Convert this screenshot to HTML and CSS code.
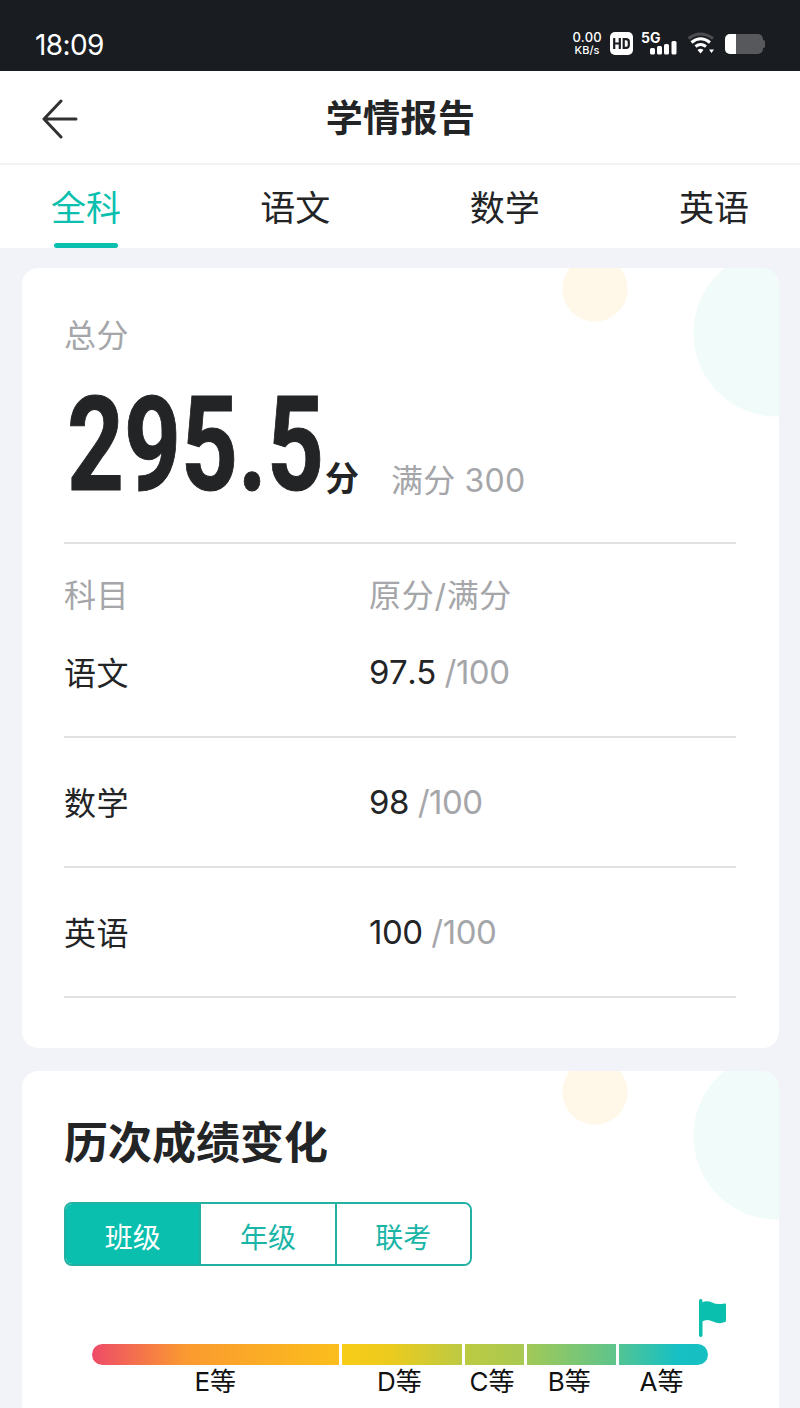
FILE: index.html
```html
<!DOCTYPE html>
<html lang="zh-CN">

<head>
    <meta charset="UTF-8">
    <meta name="viewport" content="width=device-width, initial-scale=1.0">
    <title>学情报告</title>
    <link rel="stylesheet" href="styles.css">
</head>

<body>
    <div class="status">
        <span class="time">18:09</span>
        <div class="status-icons">
            <div class="speed"><span>0.00</span><span>KB/s</span></div>
            <svg class="hd" width="23" height="23" viewBox="0 0 23 23">
                <rect width="23" height="23" rx="5" fill="#fff"/>
                <path d="M4.200 6v11M9.800 6v11M4.200 11.500H9.800M13.700 7.100H16c2 0 2.800 1 2.800 2.600v3.600c0 1.600-.8 2.600-2.800 2.600h-2.300z" fill="none" stroke="#191c21" stroke-width="2.200"/>
            </svg>
            <div class="signal">
                <span>5G</span>
                <svg width="27" height="14" viewBox="0 0 27 14" fill="#fff">
                    <rect x="0" y="7" width="5" height="6.500" rx="1.500"/>
                    <rect x="7" y="5" width="5" height="8.500" rx="1.500"/>
                    <rect x="14" y="3" width="5" height="10.500" rx="1.500"/>
                    <rect x="21.500" y="0" width="5" height="13.500" rx="1.500"/>
                </svg>
            </div>
            <svg class="wifi" width="28" height="23" viewBox="0 0 28 23" fill="none" stroke-width="3">
                <path d="M1.500 6.500Q13.500-2.500 26 6.500" stroke="#4b4d51"/>
                <path d="M4.500 10.500Q13.500 3 23 10.500M8.500 14.500Q13.500 10.500 19 14.500" stroke="#fff"/>
                <path d="M10.500 18q3-2.500 6 0l-3 3.500zM22 17.500h5l-2.500 3.500z" fill="#fff"/>
            </svg>
            <svg class="battery" width="40" height="20" viewBox="0 0 40 20">
                <rect width="38" height="20" rx="5" fill="#57585b"/>
                <rect x="37" y="6" width="3" height="8" rx="1.500" fill="#57585b"/>
                <path d="M5 0h6v20H5a5 5 0 0 1-5-5V5a5 5 0 0 1 5-5z" fill="#fff"/>
            </svg>
        </div>
    </div>

    <header class="header">
        <svg class="back" width="38" height="40" viewBox="0 0 38 40" fill="none" stroke="#303133" stroke-width="3" stroke-linecap="round" stroke-linejoin="round">
            <path d="M20 2L3 20l17 18M3 20h32"/>
        </svg>
        <h1>学情报告</h1>
    </header>

    <nav class="tabs">
        <a class="tab active">全科</a>
        <a class="tab">语文</a>
        <a class="tab">数学</a>
        <a class="tab">英语</a>
    </nav>

    <main>
        <section class="card total">
            <p class="label">总分</p>
            <div class="score">
                <div class="number"><span>295.5</span></div>
                <span class="unit">分</span>
                <span class="full">满分 300</span>
            </div>
            <div class="row head"><span>科目</span><span>原分/满分</span></div>
            <div class="row"><span>语文</span><span>97.5 <i>/100</i></span></div>
            <div class="row"><span>数学</span><span>98 <i>/100</i></span></div>
            <div class="row"><span>英语</span><span>100 <i>/100</i></span></div>
        </section>

        <section class="card history">
            <h2>历次成绩变化</h2>
            <div class="switch">
                <button class="on">班级</button>
                <button>年级</button>
                <button>联考</button>
            </div>
            <div class="flag">
                <svg width="28" height="38" viewBox="0 0 28 38" fill="#0abfae">
                    <rect x="0" y="0" width="3.500" height="38" rx="1.700"/>
                    <path d="M3 3.500Q8 1 13 3.500T25.500 4.500Q27 4 27 5.500V21.500Q27 22.500 26 23Q20 25.500 14 22.500T3 22.500z"/>
                </svg>
            </div>
            <div class="levels">
                <div class="level e"><b></b><span>E等</span></div>
                <div class="level d"><b></b><span>D等</span></div>
                <div class="level c"><b></b><span>C等</span></div>
                <div class="level b"><b></b><span>B等</span></div>
                <div class="level a"><b></b><span>A等</span></div>
            </div>
        </section>
    </main>
</body>

</html>
```
FILE: styles.css
```css
* {
    box-sizing: border-box;
    margin: 0;
    padding: 0;
}

body {
    height: 1408px;
    overflow: hidden;
    background: #f2f3f8;
    color: #232426;
    font-family: Inter, "Noto Sans CJK SC", sans-serif;
    font-kerning: none;
}

/* status bar */
.status {
    display: flex;
    justify-content: space-between;
    height: 71px;
    padding: 17px 35px 0 35px;
    background: #191c21;
    color: #fff;
}
.time {
    font-size: 28px;
    line-height: 56px;
    letter-spacing: -0.6px;
}
.status-icons {
    display: flex;
    align-items: flex-start;
    padding-top: 15px;
}
.speed {
    display: flex;
    flex-direction: column;
    align-items: center;
    width: 30px;
    margin: -1px 8px 0 0;
    font-size: 13px;
    font-weight: 500;
    line-height: 13px;
}
.speed span + span {
    font-size: 11px;
    line-height: 12px;
}
.signal {
    width: 36px;
    height: 23px;
    margin: 0 10px 0 8px;
}
.signal span {
    display: block;
    font-size: 14px;
    font-weight: 700;
    line-height: 11px;
    height: 9px;
}
.signal svg {
    display: block;
    margin-left: 9px;
}
.battery {
    margin: 2px 0 0 10px;
}

/* title + tabs */
.header {
    display: grid;
    grid-template-columns: 60px 1fr 60px;
    align-items: center;
    height: 94px;
    padding: 3px 40px 0 41px;
    background: #fff;
    border-bottom: 2px solid #f3f3f5;
}
.header h1 {
    font-size: 37px;
    font-weight: 700;
    line-height: 50px;
    letter-spacing: 0.4px;
    text-align: center;
}
.tabs {
    display: flex;
    justify-content: space-between;
    height: 83px;
    padding: 0 51px;
    background: #fff;
}
.tab {
    display: flex;
    flex-direction: column;
    align-items: center;
    font-size: 35px;
    line-height: 86px;
    height: 83px;
}
.active {
    color: #0abfae;
}
.active::after {
    content: "";
    width: 64px;
    height: 6px;
    margin-top: -8px;
    border-radius: 3px;
    background: #0abfae;
}

/* cards */
main {
    padding: 20px 21px 0 22px;
}
.card {
    padding: 0 43px 0 42px;
    border-radius: 16px;
    background:
        radial-gradient(circle at 573px 21px, #fff7e8 32px, transparent 33px),
        radial-gradient(circle at 755px 65px, #f1fbf9 83px, transparent 84px),
        #fff;
}
.total {
    height: 780px;
    padding-top: 44px;
}
.label {
    font-size: 32px;
    line-height: 48px;
    letter-spacing: 0.5px;
    color: #a5a6a9;
}
.score {
    display: flex;
    height: 184px;
    border-bottom: 2px solid #e1e1e3;
    white-space: nowrap;
}
.number {
    width: 261px;
    padding-left: 3px;
    overflow: hidden;
    font-family: Roboto, sans-serif;
    font-size: 132px;
    font-weight: 700;
    line-height: 170px;
}
.number span {
    display: inline-block;
    width: 340px;
    transform: scaleX(0.753);
    transform-origin: 0 0;
    -webkit-text-stroke: 1px #232426;
}
.unit {
    width: 66px;
    font-size: 34px;
    font-weight: 700;
    line-height: 50px;
    margin-top: 94px;
}
.full {
    font-size: 32px;
    line-height: 48px;
    margin-top: 97px;
    letter-spacing: 0.2px;
    color: #a5a6a9;
}
.row {
    display: grid;
    grid-template-columns: 305px 1fr;
    align-items: center;
    height: 130px;
    padding-top: 3px;
    border-bottom: 2px solid #e1e1e3;
    font-size: 32px;
    line-height: 48px;
    letter-spacing: 0.5px;
}
.row span + span {
    margin-top: -3px;
    font-size: 33px;
    letter-spacing: -0.5px;
}
.row i {
    font-style: normal;
    color: #a5a6a9;
}
.head {
    height: 64px;
    padding-top: 36px;
    border: 0;
    line-height: 32px;
    color: #a5a6a9;
}
.row.head span + span {
    margin-top: 0;
    font-size: 32px;
    letter-spacing: 0.7px;
}

.history {
    height: 400px;
    margin-top: 23px;
    padding-top: 41px;
}
.history h2 {
    font-size: 44px;
    font-weight: 700;
    line-height: 62px;
}
.switch {
    display: flex;
    width: 408px;
    height: 64px;
    margin-top: 28px;
    border: 2px solid #22b0a3;
    border-radius: 8px;
    overflow: hidden;
}
.switch button {
    flex: 1;
    border: 0;
    border-left: 2px solid #22b0a3;
    background: #fff;
    color: #19b5a7;
    font-family: inherit;
    font-size: 28px;
    padding-top: 4px;
}
.switch .on {
    border-left: 0;
    background: #0abfae;
    color: #fff;
}
.flag {
    display: flex;
    justify-content: flex-end;
    height: 78px;
    padding: 33px 9px 0 0;
}

/* grade scale */
.levels {
    display: grid;
    grid-template-columns: 246.5px 120px 59px 89.5px 89px;
    gap: 3px;
    margin: 0 29px 0 28px;
    color: #111;
    text-align: center;
}
.level b {
    display: block;
    height: 21px;
}
.level span {
    display: block;
    margin: 0 2px 0 -2px;
    font-size: 26px;
    line-height: 34px;
    white-space: nowrap;
}
.e b {
    border-radius: 11px 0 0 11px;
    background: linear-gradient(90deg, #ee4b68, #fa9a30 38%, #fbbe1c);
}
.level.e span {
    margin: 0;
}
.d b {
    background: linear-gradient(90deg, #f8cc18, #eccb1e 40%, #bdca42);
}
.c b {
    background: linear-gradient(90deg, #bdca42, #a8c952);
}
.b b {
    background: linear-gradient(90deg, #a2c957, #5dc48c);
}
.a b {
    border-radius: 0 11px 11px 0;
    background: linear-gradient(90deg, #52c494, #16c0c4 65%, #16bfc0);
}
```
